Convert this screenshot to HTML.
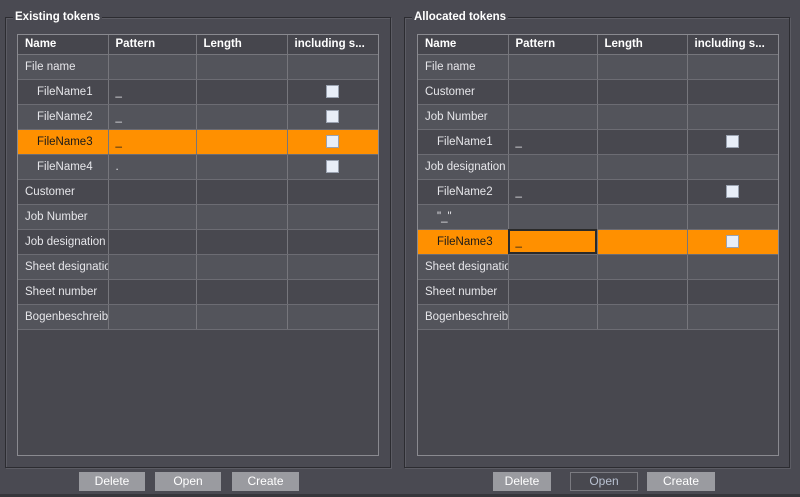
<!DOCTYPE html>
<html><head><meta charset="utf-8"><style>
*{margin:0;padding:0;box-sizing:border-box}
body{width:800px;height:497px;background:#4a4a52;font-family:"Liberation Sans",sans-serif;font-size:11.5px;color:#e6e6ea;position:relative;overflow:hidden}
.fs{position:absolute;top:17px;width:386px;height:451px;border:1px solid #2c2c31;box-shadow:inset 1px 1px 0 #5c5c64,1px 1px 0 #5c5c64}
.lg{position:absolute;top:-7px;left:7px;background:#4a4a52;padding:0 2px;font-weight:bold;font-size:11.5px;color:#fff;line-height:13px}
.tw{position:absolute;top:34px;width:362px;height:422px;border:1px solid #8a8a90;background:#48484f}
table{border-collapse:collapse;table-layout:fixed;width:360px}
td,th{border-right:1px solid #76767c;border-bottom:1px solid #6c6c73;height:25px;padding:0 0 0 7px;white-space:nowrap;overflow:hidden;text-align:left;font-weight:normal}
th{height:19px;font-weight:bold;background:#46464d;color:#fff;border-bottom:1px solid #76767c}
td:last-child,th:last-child{border-right:none}
tr.l td{background:#53545b}
tr.d td{background:#48484f}
tr.o td{background:#ff9000;color:#1a1a1a}
.i{padding-left:19px}
.cb{text-align:center;padding:0}
.cb span{display:inline-block;width:13px;height:13px;background:#e8eef8;border:1px solid #9aa2b0;vertical-align:middle}
.ed{outline:2px solid #2a2a2a;outline-offset:-2px}
.btn{position:absolute;top:472px;height:19px;background:#9a9ba0;color:#fff;font-size:12px;text-align:center;line-height:19px;font-family:"Liberation Sans Narrow","Liberation Sans",sans-serif}
.btn.dk{background:#48484f;border:1px solid #7a7a80;color:#b8c0d0;line-height:17px}
.bot{position:absolute;left:0;top:494px;width:800px;height:3px;background:#36363b}
</style></head><body>
<div class="fs" style="left:5px"><div class="lg">Existing tokens</div></div>
<div class="tw" style="left:17px"><table>
<colgroup><col style="width:90px"><col style="width:88px"><col style="width:91px"><col style="width:91px"></colgroup>
<tr><th>Name</th><th>Pattern</th><th>Length</th><th>including s...</th></tr>
<tr class="l"><td>File name</td><td></td><td></td><td></td></tr>
<tr class="d"><td class="i">FileName1</td><td>_</td><td></td><td class="cb"><span></span></td></tr>
<tr class="l"><td class="i">FileName2</td><td>_</td><td></td><td class="cb"><span></span></td></tr>
<tr class="o"><td class="i">FileName3</td><td>_</td><td></td><td class="cb"><span></span></td></tr>
<tr class="l"><td class="i">FileName4</td><td>.</td><td></td><td class="cb"><span></span></td></tr>
<tr class="d"><td>Customer</td><td></td><td></td><td></td></tr>
<tr class="l"><td>Job Number</td><td></td><td></td><td></td></tr>
<tr class="d"><td>Job designation</td><td></td><td></td><td></td></tr>
<tr class="l"><td>Sheet designation</td><td></td><td></td><td></td></tr>
<tr class="d"><td>Sheet number</td><td></td><td></td><td></td></tr>
<tr class="l"><td>Bogenbeschreibung</td><td></td><td></td><td></td></tr>
</table></div>

<div class="fs" style="left:404px"><div class="lg">Allocated tokens</div></div>
<div class="tw" style="left:417px"><table>
<colgroup><col style="width:90px"><col style="width:89px"><col style="width:90px"><col style="width:91px"></colgroup>
<tr><th>Name</th><th>Pattern</th><th>Length</th><th>including s...</th></tr>
<tr class="l"><td>File name</td><td></td><td></td><td></td></tr>
<tr class="d"><td>Customer</td><td></td><td></td><td></td></tr>
<tr class="l"><td>Job Number</td><td></td><td></td><td></td></tr>
<tr class="d"><td class="i">FileName1</td><td>_</td><td></td><td class="cb"><span></span></td></tr>
<tr class="l"><td>Job designation</td><td></td><td></td><td></td></tr>
<tr class="d"><td class="i">FileName2</td><td>_</td><td></td><td class="cb"><span></span></td></tr>
<tr class="l"><td class="i">"_"</td><td></td><td></td><td></td></tr>
<tr class="o"><td class="i">FileName3</td><td class="ed">_</td><td></td><td class="cb"><span></span></td></tr>
<tr class="l"><td>Sheet designation</td><td></td><td></td><td></td></tr>
<tr class="d"><td>Sheet number</td><td></td><td></td><td></td></tr>
<tr class="l"><td>Bogenbeschreibung</td><td></td><td></td><td></td></tr>
</table></div>

<div class="btn" style="left:79px;width:66px">Delete</div>
<div class="btn" style="left:155px;width:66px">Open</div>
<div class="btn" style="left:232px;width:67px">Create</div>
<div class="btn" style="left:493px;width:58px">Delete</div>
<div class="btn dk" style="left:570px;width:68px">Open</div>
<div class="btn" style="left:647px;width:68px">Create</div>
<div class="bot"></div>
</body></html>
